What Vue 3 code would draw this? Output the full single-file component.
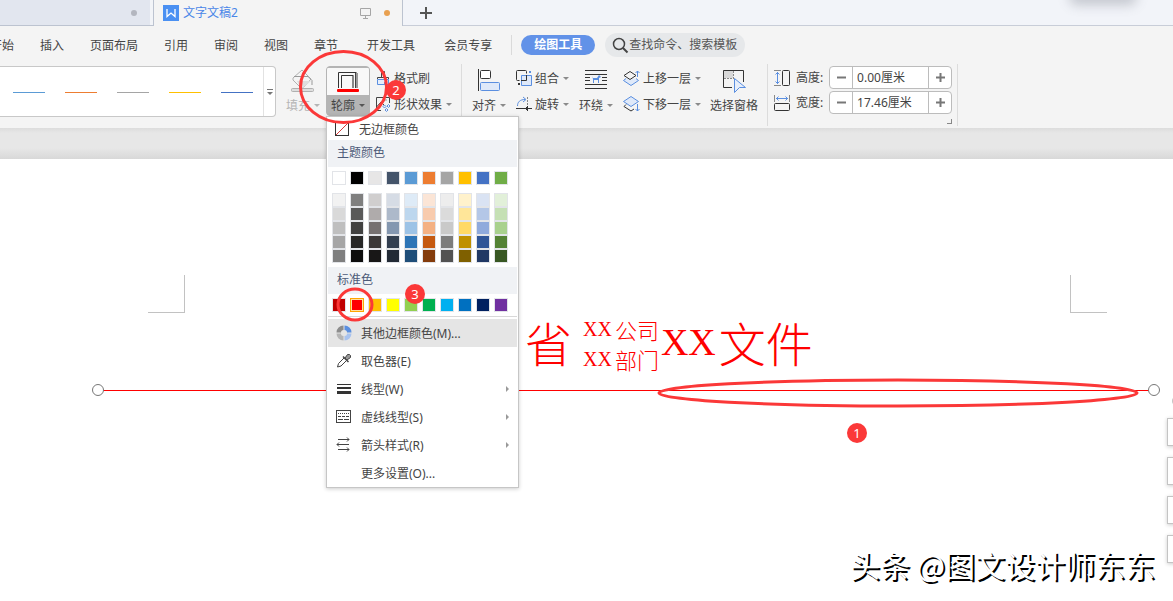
<script setup>
import { ref } from 'vue'

const tabs = ['开始', '插入', '页面布局', '引用', '审阅', '视图', '章节', '开发工具', '会员专享']
const wideTabs = ['开发工具', '会员专享']
const lineStyles = ['#5b9bd5', '#ed7d31', '#a5a5a5', '#ffc000', '#4472c4']
const themeColors = ['#ffffff', '#000000', '#e7e6e6', '#44546a', '#5b9bd5', '#ed7d31', '#a5a5a5', '#ffc000', '#4472c4', '#70ad47']
const tints = [
  '#f2f2f2', '#7f7f7f', '#d0cece', '#d6dce5', '#deebf7', '#fbe5d6', '#ededed', '#fff2cc', '#dae3f3', '#e2f0d9',
  '#d9d9d9', '#595959', '#afabab', '#adb9ca', '#bdd7ee', '#f8cbad', '#dbdbdb', '#ffe699', '#b4c7e7', '#c5e0b4',
  '#bfbfbf', '#404040', '#767171', '#8497b0', '#9dc3e6', '#f4b183', '#c9c9c9', '#ffd966', '#8faadc', '#a9d18e',
  '#a6a6a6', '#262626', '#3b3838', '#333f50', '#2e75b6', '#c55a11', '#7c7c7c', '#bf9000', '#2f5597', '#548235',
  '#7f7f7f', '#0d0d0d', '#181717', '#222a35', '#1f4e79', '#843c0c', '#525252', '#7f6000', '#203864', '#385723'
]
const standardColors = ['#c00000', '#ff0000', '#ffc000', '#ffff00', '#92d050', '#00b050', '#00b0f0', '#0070c0', '#002060', '#7030a0']
const selected = ref('#ff0000')
const heightValue = ref('0.00厘米')
const widthValue = ref('17.46厘米')
</script>

<template>
  <div class="app">
    <header class="tabbar">
      <div class="tab tab-old"><i class="dot"></i></div>
      <div class="tab tab-active">
        <svg class="logo" width="16" height="16" viewBox="0 0 16 16"><rect width="16" height="16" fill="#4a90f2" /><path d="M4 4v7.500l4-3.500 4 3.500V4" fill="none" stroke="#fff" stroke-width="1.300" /></svg>
        <span class="tab-name">文字文稿2</span>
        <svg class="monitor" width="12" height="12" viewBox="0 0 12 12" fill="none" stroke="#a6a6a6"><path d="M.5 1.500h10v7H.5zM5.500 8.500v3M3 11.500h5" /></svg>
        <i class="dot orange"></i>
      </div>
      <div class="tab-rest">
        <button class="new-tab" aria-label="新建">
          <svg width="12" height="12" viewBox="0 0 12 12"><path d="M6 0v12M0 6h12" stroke="#555" stroke-width="2" /></svg>
        </button>
        <i class="float-shadow"></i>
      </div>
    </header>

    <nav class="menu">
      <button v-for="t in tabs" :key="t" class="menu-item" :class="{ wide: wideTabs.includes(t) }">{{ t }}</button>
      <i class="menu-sep"></i>
      <button class="pill">绘图工具</button>
      <label class="search">
        <svg width="18" height="18" viewBox="0 0 18 18" fill="none" stroke="#444" stroke-width="1.500"><circle cx="8" cy="8" r="5.500" /><path d="M12 12l4.500 4.500" stroke-width="2" /></svg>
        <input type="text" placeholder="查找命令、搜索模板" aria-label="查找命令、搜索模板" />
      </label>
    </nav>

    <section class="ribbon">
      <div class="gallery">
        <div class="gallery-lines">
          <button v-for="c in lineStyles" :key="c" class="line-style" :aria-label="c"><i :style="{ background: c }"></i></button>
        </div>
        <button class="gallery-more" aria-label="更多样式">
          <svg width="6" height="6" viewBox="0 0 6 6"><path d="M0 .5h6" stroke="#777" /><path d="M0 3h6L3 6z" fill="#777" /></svg>
        </button>
      </div>

      <button class="big fill-btn">
        <svg width="26" height="26" viewBox="0 0 26 26" fill="none" stroke="#b0b0b0"><path d="M3 10L12 2l9 9-7 8h-4l-7-7z" /><path d="M7 13h14l-7 6h-4z" fill="#dedede" stroke="none" /><path d="M4 8.500h14M18 8.500l4 4V17" stroke="#999" /><rect x="1.500" y="20.500" width="22" height="3" rx="1" fill="#dedede" /></svg>
        <span>填充<i class="arrow"></i></span>
      </button>

      <div class="outline">
        <button class="outline-btn" aria-expanded="true">
          <span class="outline-top">
            <svg width="24" height="22" viewBox="0 0 24 22" fill="none"><path d="M2.500 17V1.500h18" stroke="#333" /><path d="M21 2v15" stroke="#999" stroke-width="2" /><path d="M19.500 2v15" stroke="#444" /><path d="M5.500 17V4.500h12" stroke="#333" /><path d="M17 5v12" stroke="#888" stroke-width="2" /><rect x="1" y="18" width="22" height="3" rx="1" fill="#f00" /></svg>
          </span>
          <span class="outline-label">轮廓<i class="arrow dark"></i></span>
        </button>

        <div class="dropdown">
          <button class="none-item">
            <svg width="16" height="16" viewBox="0 0 16 16" fill="none"><rect x="1.500" y="1.500" width="13" height="13" stroke="#333" /><path d="M2 14L14 2" stroke="#d33a3a" /></svg>
            <span>无边框颜色</span>
          </button>
          <h3>主题颜色</h3>
          <div class="swatches">
            <button v-for="c in themeColors" :key="c" class="swatch" :style="{ background: c }" :aria-label="c"></button>
          </div>
          <div class="swatches tints">
            <button v-for="(c, i) in tints" :key="i" class="swatch" :style="{ background: c }" :aria-label="c"></button>
          </div>
          <h3>标准色</h3>
          <div class="swatches standard">
            <button v-for="c in standardColors" :key="c" class="swatch" :class="{ on: c === selected }" :style="{ background: c }" :aria-label="c" @click="selected = c"></button>
          </div>
          <hr />
          <button class="item hot">
            <svg width="16" height="16" viewBox="0 0 16 16"><path d="M7.500 .5a7 7 0 0 0-7 7H5a2.500 2.500 0 0 1 2.500-2.500z" fill="#8c8c8c" /><path d="M8.500 .5a7 7 0 0 1 7 7H11a2.500 2.500 0 0 0-2.500-2.500z" fill="#5b8fe0" /><path d="M.5 8.500a7 7 0 0 0 7 7V11A2.500 2.500 0 0 1 5 8.500z" fill="#b5b5b5" /><path d="M15.500 8.500a7 7 0 0 1-7 7V11A2.500 2.500 0 0 0 11 8.500z" fill="#a9c3ee" /></svg>
            <span>其他边框颜色(M)...</span>
          </button>
          <button class="item">
            <svg width="16" height="16" viewBox="0 0 16 16" fill="none" stroke="#444"><path d="M8 5L2.500 10.500 1.500 14l3.500-1L10.500 7.500" /><path d="M7 3.500l5.500 5.500" stroke-width="1.500" /><path d="M9 5l2.500-3.500h2l1 1v2L11 7z" fill="#999" /></svg>
            <span>取色器(E)</span>
          </button>
          <button class="item">
            <svg width="16" height="16" viewBox="0 0 16 16" fill="#333"><path d="M1 3h14v1H1zM1 6h14v2H1zM1 10h14v3H1z" /></svg>
            <span>线型(W)</span><i class="sub"></i>
          </button>
          <button class="item">
            <svg width="16" height="16" viewBox="0 0 16 16" fill="none" stroke="#444"><rect x=".5" y="1.500" width="14" height="12" /><path d="M2 4.500h11" stroke-dasharray="1 1" /><path d="M2 7.500h11" stroke-dasharray="3 1" /><path d="M2 10.500h11" stroke-dasharray="5 1" /></svg>
            <span>虚线线型(S)</span><i class="sub"></i>
          </button>
          <button class="item">
            <svg width="16" height="16" viewBox="0 0 16 16" fill="none" stroke="#444"><path d="M2 2.500h11M11 .5l2 2-2 2M13 7.500H1M3 5.500l-2 2 2 2M2 12.500h11M11 10.500l2 2-2 2" /></svg>
            <span>箭头样式(R)</span><i class="sub"></i>
          </button>
          <button class="item last"><span>更多设置(O)...</span></button>
        </div>
      </div>

      <div class="stack format">
        <button class="small">
          <svg width="16" height="16" viewBox="0 0 16 16" fill="none"><path d="M6.500 7V1.500h3V7M2.500 9V7.500h11V9" stroke="#444" /><path d="M2.500 9.500h11v5h-11zM9.500 12v2" stroke="#5b8fe0" fill="#e6eefb" /></svg>
          <span>格式刷</span>
        </button>
        <button class="small">
          <svg width="16" height="16" viewBox="0 0 16 16" fill="none"><path d="M6 14.500H1.500v-13h13V7M1.500 11L6 6l3 3" stroke="#444" /><path d="M10.500 4h1" stroke="#444" /><path d="M8 10.500l1.500-1.500 1.500 1.500L9.500 12zM12 10l1.500-1.500L15 10l-1.500 1.500zM10 14l1.500-1.500L13 14l-1.500 1.500z" stroke="#5b8fe0" /></svg>
          <span>形状效果</span><i class="arrow"></i>
        </button>
      </div>

      <i class="sep"></i>

      <button class="big align-btn">
        <svg width="24" height="24" viewBox="0 0 24 24" fill="none"><path d="M1.500 1v22" stroke="#333" /><rect x="3.500" y="2.500" width="10" height="8" rx="1" stroke="#333" fill="#fff" /><rect x="3.500" y="14.500" width="19" height="8" rx="1" stroke="#5b8fe0" fill="#dfe9f9" /></svg>
        <span>对齐<i class="arrow"></i></span>
      </button>

      <div class="stack group">
        <button class="small">
          <svg width="16" height="16" viewBox="0 0 16 16" fill="none"><path d="M3.500 10.500h-2a1 1 0 0 1-1-1v-8a1 1 0 0 1 1-1h8a1 1 0 0 1 1 1v2" stroke="#333" /><path d="M5.500 5.500h10v10h-10z" stroke="#5b8fe0" fill="#dfe9f9" /><path d="M5 10.500h5.500V5" stroke="#333" /><path d="M2 13h2v2H2z" fill="#333" /><path d="M13 1h2v2h-2z" fill="#5b8fe0" /></svg>
          <span>组合</span><i class="arrow"></i>
        </button>
        <button class="small">
          <svg width="16" height="16" viewBox="0 0 16 16" fill="none"><path d="M1.500 10C1.500 6 4 3.500 9 3.500M7 1l3 2.500L7 6" stroke="#5b8fe0" /><path d="M0 12.500h16M11.500 10v5M10 11l1.500 1.500L10 14" stroke="#333" /><path d="M11.500 1v8" stroke="#888" stroke-dasharray="2 1" /></svg>
          <span>旋转</span><i class="arrow"></i>
        </button>
      </div>

      <button class="big wrap-btn">
        <svg width="22" height="22" viewBox="0 0 22 22"><path d="M0 2.500h22M0 6.500h22M0 9.500h5M17 9.500h5M0 12.500h5M17 12.500h5M0 16.500h22M0 20.500h22" stroke="#333" /><path d="M7 8l1 2h4l2-3 2 2-2 1v5h-1v-3H9v3H8v-4z" fill="#5b8fe0" /></svg>
        <span>环绕<i class="arrow"></i></span>
      </button>

      <div class="stack layer">
        <button class="small">
          <svg width="17" height="16" viewBox="0 0 17 16" fill="none"><path d="M3 8.500L.5 10.500l7.500 5 7.500-5L13 8.500" stroke="#5b8fe0" fill="#dfe9f9" /><path d="M1 5.500L7 1.500l6 4-6 4z" stroke="#333" fill="#f4f4f4" /><path d="M14.500 7V1M12.500 3l2-2 2 2" stroke="#5b8fe0" /></svg>
          <span>上移一层</span><i class="arrow"></i>
        </button>
        <button class="small">
          <svg width="17" height="16" viewBox="0 0 17 16" fill="none"><path d="M3 8.500L1 10.500l7 4.500 3-2" stroke="#333" /><path d="M.5 5.500L8 .5l7.500 5-7.500 5z" stroke="#5b8fe0" fill="#dfe9f9" /><path d="M14.500 8v7M12.500 13l2 2 2-2" stroke="#5b8fe0" /></svg>
          <span>下移一层</span><i class="arrow"></i>
        </button>
      </div>

      <button class="big pane-btn">
        <svg width="26" height="26" viewBox="0 0 26 26" fill="none"><path d="M2 2h10v8H2z" fill="#d8d8d8" /><path d="M11 19.500H2.500v-17h20V14" stroke="#333" /><path d="M3 10.500h9M12.500 3v8" stroke="#888" stroke-dasharray="2 1" /><path d="M13.500 10.500l11 9h-6l-5 5z" stroke="#5b8fe0" fill="#e6eefb" /></svg>
        <span>选择窗格</span>
      </button>

      <i class="sep"></i>

      <div class="sizes">
        <div class="size-row">
          <svg width="16" height="16" viewBox="0 0 16 16" fill="none"><path d="M0 .5h7M0 15.500h7" stroke="#888" /><path d="M3.500 2v12M1.500 4.500l2-2 2 2M1.500 11.500l2 2 2-2" stroke="#5b8fe0" /><rect x="8.500" y=".5" width="7" height="15" rx="1" stroke="#333" /></svg>
          <label for="h">高度:</label>
          <div class="stepper">
            <button aria-label="减小高度"><svg width="9" height="9" viewBox="0 0 9 9"><path d="M0 4.500h9" stroke="#777" stroke-width="2" /></svg></button>
            <input id="h" v-model="heightValue" type="text" />
            <button aria-label="增大高度"><svg width="9" height="9" viewBox="0 0 9 9"><path d="M0 4.500h9M4.500 0v9" stroke="#777" stroke-width="2" /></svg></button>
          </div>
        </div>
        <div class="size-row">
          <svg width="16" height="16" viewBox="0 0 16 16" fill="none"><path d="M.5 0v7M15.500 0v7" stroke="#888" /><path d="M2 3.500h12M4.500 1.500l-2 2 2 2M11.500 1.500l2 2-2 2" stroke="#5b8fe0" /><rect x=".5" y="8.500" width="15" height="7" rx="1" stroke="#333" /></svg>
          <label for="w">宽度:</label>
          <div class="stepper">
            <button aria-label="减小宽度"><svg width="9" height="9" viewBox="0 0 9 9"><path d="M0 4.500h9" stroke="#777" stroke-width="2" /></svg></button>
            <input id="w" v-model="widthValue" type="text" />
            <button aria-label="增大宽度"><svg width="9" height="9" viewBox="0 0 9 9"><path d="M0 4.500h9M4.500 0v9" stroke="#777" stroke-width="2" /></svg></button>
          </div>
        </div>
        <button class="launcher" aria-label="更多"></button>
      </div>

      <i class="sep"></i>
    </section>

    <div class="gutter"></div>

    <main class="doc">
      <i class="corner left"></i>
      <i class="corner right"></i>
      <h1 class="title">
        <span>省</span>
        <span class="units">
          <span><b>XX</b>公司</span>
          <span><b>XX</b>部门</span>
        </span>
        <span class="tail"><b>XX</b>文件</span>
      </h1>
      <i class="red-line"></i>
      <i class="handle start"></i>
      <i class="handle end"></i>
      <i class="side-knob"></i>
      <div class="side-tools">
        <button v-for="n in 4" :key="n" :aria-label="'工具' + n"></button>
      </div>
      <p class="watermark">头条 @图文设计师东东</p>
    </main>

    <svg class="notes" width="1160" height="450" viewBox="0 0 1160 450" fill="none" stroke="#fb3838" stroke-width="3">
      <ellipse cx="343.500" cy="87" rx="43" ry="35.500" />
      <ellipse cx="355" cy="304.500" rx="17" ry="15.500" />
      <ellipse cx="898" cy="393" rx="239" ry="13" />
      <g fill="#fb3838" stroke="none"><circle cx="396" cy="90" r="10" /><circle cx="415" cy="294" r="10" /><circle cx="857" cy="433" r="10" /></g>
      <g class="nums"><text x="396" y="95">2</text><text x="415" y="299">3</text><text x="857" y="438">1</text></g>
    </svg>
  </div>
</template>

<style>
body { margin: 0; }
</style>

<style scoped>
.app {
  position: relative;
  display: flex;
  flex-direction: column;
  min-height: 100vh;
  overflow: hidden;
  background: #f4f4f4;
  color: #444;
  font: 12px/16px "Noto Sans", "Noto Sans CJK SC", sans-serif;
}
* { box-sizing: border-box; }
button, input { font: inherit; color: inherit; background: none; border: 0; padding: 0; margin: 0; }
button { white-space: nowrap; }
svg { display: block; flex: none; }

.tabbar { display: flex; height: 26px; }
.tab { display: flex; align-items: center; flex: none; }
.tab-old { width: 154px; justify-content: flex-end; padding-right: 12px; background: #e2e6ef; border-right: 1px solid #bcc3d0; border-bottom: 1px solid #bcc3d0; box-shadow: inset -3px 0 #f2f4f8; }
.tab-active { width: 249px; padding: 0 12px 0 9px; border-right: 1px solid #bcc3d0; }
.tab-name { margin-left: 4px; color: #4a86e8; }
.monitor { margin-left: auto; }
.dot { width: 6px; height: 6px; margin-right: 4px; border-radius: 50%; background: #b3b6bf; }
.orange { margin: 0 0 0 12px; background: #e8a050; }
.tab-rest { position: relative; flex: 1; display: flex; align-items: center; padding-left: 17px; background: #f2f4f9; border-bottom: 1px solid #c8cdd8; }
.float-shadow { position: absolute; right: 40px; top: -9px; width: 60px; height: 8px; border-radius: 4px; box-shadow: 0 2px 12px 4px rgba(90, 95, 110, .3); }

.menu { display: flex; align-items: center; height: 38px; margin-left: -10px; }
.menu-item { margin-right: 26px; padding-top: 2px; }
.wide { margin-left: 3px; }
.menu-sep { width: 1px; height: 20px; margin-left: -7px; background: #dadada; }
.pill { width: 74px; height: 20px; margin-left: 9px; border-radius: 10px; background: #6292e8; color: #fff; font-weight: 700; }
.search { display: flex; align-items: center; width: 140px; height: 24px; margin-left: 10px; padding-left: 6px; border-radius: 12px; background: #e6e8ea; }
.search input { flex: 1; min-width: 0; outline: 0; }
.search input::placeholder { color: #555; opacity: 1; }

.ribbon { display: flex; align-items: flex-start; height: 64px; padding-top: 2px; }
.gallery { display: flex; width: 276px; height: 51px; flex: none; background: #fff; border: 1px solid #c8c8c8; border-left: 0; border-radius: 0 4px 4px 0; }
.gallery-lines { display: flex; align-items: center; flex: 1; gap: 20px; padding: 2px 0 0 13px; }
.line-style { width: 32px; height: 31px; }
.line-style i { display: block; height: 1px; }
.gallery-more { display: flex; align-items: center; justify-content: center; width: 12px; border-left: 1px solid #e2e2e2; }

.big { display: flex; flex-direction: column; align-items: center; justify-content: space-between; height: 48px; padding-top: 2px; }
.arrow { display: inline-block; margin-left: 4px; vertical-align: 3px; border: 3px solid transparent; border-top-color: #8a8a8a; border-bottom: 0; }
.dark { border-top-color: #555; }
.fill-btn { margin-left: 10px; color: #b5b5b5; }
.fill-btn .arrow { border-top-color: #b5b5b5; }

.outline { position: relative; margin-left: 6px; }
.outline-btn { display: block; width: 44px; height: 50px; border: 1px solid #b4b4b4; border-radius: 4px; background: #b4b4b4; overflow: hidden; }
.outline-top { display: flex; align-items: center; justify-content: center; height: 27px; background: #f8f8f8; }
.outline-label { display: block; padding-top: 3px; }

.dropdown { position: absolute; z-index: 3; left: 0; top: 50px; width: 193px; padding: 1px 1px 0; background: #fff; border: 1px solid #c6c6c6; box-shadow: 0 1px 4px rgba(0, 0, 0, .2); }
.none-item { display: flex; align-items: center; height: 22px; padding-left: 6px; }
.none-item span { margin-left: 9px; padding-top: 2px; }
h3 { margin: 0; padding: 0 0 2px 9px; font-size: 12px; font-weight: 400; line-height: 25px; color: #4c5a78; background: #f0f2f5; }
.swatches { display: grid; grid-template-columns: repeat(10, 14px); column-gap: 4px; padding: 4px 0 8px 4px; }
.tints { padding: 0 0 4px 4px; }
.standard { padding-bottom: 4px; }
.swatch { height: 14px; border: 1px solid #e2e4e8; }
.on { border-color: #ffa500; box-shadow: inset 0 0 0 1px #ffe0a0; }
hr { margin: 0 0 2px; border: 0; border-top: 1px solid #d8d8d8; }
.item { display: flex; align-items: center; width: 100%; height: 28px; padding-left: 8px; }
.item span { margin-left: 9px; padding-top: 2px; }
.item.hot { background: #e5e5e5; }
.item.last { padding-left: 24px; }
.sub { margin: 0 8px 0 auto; border: 3px solid transparent; border-left-color: #999; border-right: 0; }

.stack { display: flex; flex-direction: column; gap: 10px; padding-top: 4px; }
.small { display: flex; align-items: center; height: 16px; }
.small span { margin-left: 3px; padding-top: 2px; }
.small .arrow { margin-left: 4px; }
.format { margin-left: 5px; }
.sep { width: 1px; height: 62px; margin: -2px 0 0 9px; background: #dcdcdc; }
.align-btn { margin-left: 10px; }
.group { margin-left: 10px; }
.wrap-btn { margin-left: 10px; }
.layer { margin-left: 10px; }
.pane-btn { margin-left: 9px; }

.sizes { display: flex; flex-direction: column; gap: 2px; margin-left: 6px; }
.size-row { display: flex; align-items: center; }
.size-row label { width: 33px; margin-left: 6px; }
.stepper { display: flex; width: 123px; height: 23px; background: #fff; border: 1px solid #bcbcbc; border-radius: 4px; }
.stepper button { display: flex; align-items: center; justify-content: center; width: 22px; }
.stepper input { flex: 1; min-width: 0; padding-left: 4px; border: solid #bcbcbc; border-width: 0 1px; outline: 0; }
.launcher { align-self: flex-end; width: 5px; height: 5px; margin-top: 3px; border: solid #888; border-width: 0 1px 1px 0; }
.sizes + .sep { margin-left: 5px; }

.gutter { height: 31px; background: linear-gradient(#dcdcdc, #e7e7e7 5px, #e7e7e7 20px, #d8d8d8); }

.doc { position: relative; flex: 1; min-height: 442px; background: #fff; }
.corner { position: absolute; top: 116px; width: 37px; height: 38px; border-bottom: 1px solid #c2c2c2; }
.left { left: 148px; border-right: 1px solid #c2c2c2; }
.right { right: 66px; border-left: 1px solid #c2c2c2; }
.title { position: absolute; left: 525px; top: 155px; display: flex; align-items: center; height: 60px; margin: 0; color: #f00; font: 300 47px/56px "Noto Sans CJK SC", sans-serif; white-space: nowrap; }
.title b { font-family: "Liberation Serif", serif; font-weight: 400; }
.title span { display: flex; align-items: center; height: 56px; }
.title .units { flex-direction: column; height: 60px; margin: 0 2px 0 11px; font-size: 22px; line-height: 30px; }
.title .units span { height: 30px; }
.units b { margin-right: 3px; font-size: 20px; }
.tail b { margin-right: 3px; font-size: 38px; }
.red-line { position: absolute; left: 98px; right: 19px; top: 231px; height: 1px; background: #f00; }
.handle { position: absolute; top: 225px; width: 12px; height: 12px; border: 1px solid #777; border-radius: 50%; background: #fff; }
.start { left: 92px; }
.end { right: 13px; }
.side-knob { position: absolute; right: -7px; top: 238px; width: 8px; height: 8px; border-radius: 50%; background: #c4c4c4; }
.side-tools { position: absolute; right: -22px; top: 259px; display: grid; gap: 11px; }
.side-tools button { width: 28px; height: 28px; background: #fff; border: 1px solid #c4c4c4; box-shadow: 0 1px 4px rgba(0, 0, 0, .2); }
.watermark { position: absolute; right: 18px; bottom: 15px; margin: 0; color: #fff; font: 30px/44px "Noto Sans CJK SC", sans-serif; text-shadow: 2px 2px 0 #000; white-space: nowrap; }
.title > span:first-child, .tail { margin-top: -4px; }

.notes { position: absolute; z-index: 5; left: 0; top: 0; pointer-events: none; }
.nums { fill: #fff; stroke: none; font-size: 13px; text-anchor: middle; }
</style>
